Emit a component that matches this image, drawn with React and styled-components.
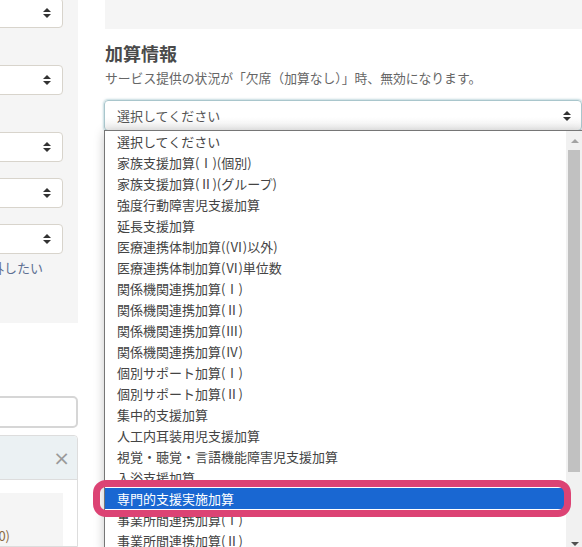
import React from 'react';
import styled, { createGlobalStyle } from 'styled-components';

const options = [
  '選択してください',
  '家族支援加算(Ⅰ)(個別)',
  '家族支援加算(Ⅱ)(グループ)',
  '強度行動障害児支援加算',
  '延長支援加算',
  '医療連携体制加算((Ⅵ)以外)',
  '医療連携体制加算(Ⅵ)単位数',
  '関係機関連携加算(Ⅰ)',
  '関係機関連携加算(Ⅱ)',
  '関係機関連携加算(Ⅲ)',
  '関係機関連携加算(Ⅳ)',
  '個別サポート加算(Ⅰ)',
  '個別サポート加算(Ⅱ)',
  '集中的支援加算',
  '人工内耳装用児支援加算',
  '視覚・聴覚・言語機能障害児支援加算',
  '入浴支援加算',
  '専門的支援実施加算',
  '事業所間連携加算(Ⅰ)',
  '事業所間連携加算(Ⅱ)'
];

const SELECTED = 17;

function Arrows() {
  return (
    <svg width="8" height="12" viewBox="0 0 8 12">
      <polygon points="0,5 4,1 8,5" fill="#333" />
      <polygon points="0,7 4,11 8,7" fill="#333" />
    </svg>
  );
}

export default function App() {
  return (
    <>
      <GlobalStyle />
      <Page>
        <LeftCol>
          <FilterPanel>
            <SmallSelect $mt={-2}><Arrows /></SmallSelect>
            <SmallSelect $mt={37}><Arrows /></SmallSelect>
            <SmallSelect $mt={37}><Arrows /></SmallSelect>
            <SmallSelect $mt={16}><Arrows /></SmallSelect>
            <SmallSelect $mt={16}><Arrows /></SmallSelect>
            <Note><span>集計から除外したい</span></Note>
          </FilterPanel>
          <SearchInput />
          <Card>
            <CardHeader>
              <Close>×</Close>
            </CardHeader>
            <CardBody>
              <GrayBox>
                <Count><span>合計（0)</span></Count>
              </GrayBox>
            </CardBody>
          </Card>
        </LeftCol>

        <RightCol>
          <TopBox />
          <Heading>加算情報</Heading>
          <Description>サービス提供の状況が「欠席（加算なし）」時、無効になります。</Description>
          <SelectWrap>
            <SelectControl>
              <span>選択してください</span>
              <Arrows />
            </SelectControl>
            <Dropdown>
              <OptionList>
                {options.map((o, i) => (
                  <Option key={o} $active={i === SELECTED}>{o}</Option>
                ))}
              </OptionList>
              <Scrollbar>
                <ScrollArrow $up />
                <Thumb />
                <ScrollArrow />
              </Scrollbar>
            </Dropdown>
            <Annotation />
          </SelectWrap>
        </RightCol>
      </Page>
    </>
  );
}

const GlobalStyle = createGlobalStyle`
  html, body {
    margin: 0;
    padding: 0;
    background: #ffffff;
    overflow: hidden;
  }
  body {
    font-family: "Noto Sans CJK JP", "Noto Sans", sans-serif;
    color: #555;
  }
`;

const Page = styled.div`
  display: grid;
  grid-template-columns: 78px 478px;
  column-gap: 26px;
  height: 547px;
  overflow: hidden;
`;

const LeftCol = styled.div`
  overflow: hidden;
  min-width: 0;
  display: flex;
  flex-direction: column;
`;

const FilterPanel = styled.div`
  background: #f5f5f5;
  height: 323px;
  padding-right: 15px;
  display: flex;
  flex-direction: column;
  flex-shrink: 0;
`;

const SmallSelect = styled.div`
  margin-top: ${p => p.$mt}px;
  margin-left: -40px;
  height: 28px;
  background: #fff;
  border: 1px solid #d8d4cc;
  border-radius: 4px;
  display: flex;
  align-items: center;
  justify-content: flex-end;
  padding-right: 11px;
  flex-shrink: 0;
`;

const Note = styled.div`
  display: flex;
  justify-content: flex-end;
  margin-top: 4px;
  margin-right: -15px;
  padding-right: 35px;
  font-size: 13px;
  line-height: 20px;
  color: #5d6f92;
  white-space: nowrap;
`;

const SearchInput = styled.div`
  margin-top: 73px;
  margin-left: -20px;
  height: 28px;
  border: 2px solid #d6d6d6;
  border-radius: 5px;
  background: #fff;
  flex-shrink: 0;
`;

const Card = styled.div`
  margin-top: 7px;
  margin-left: -20px;
  min-width: 0;
  border: 1px solid #dddddd;
  border-radius: 4px 4px 0 0;
  flex: 1;
  display: flex;
  flex-direction: column;
`;

const CardHeader = styled.div`
  height: 43px;
  background: #ebf1f3;
  border-bottom: 1px solid #dddddd;
  border-radius: 4px 4px 0 0;
  display: flex;
  align-items: center;
  justify-content: flex-end;
  padding-right: 7px;
`;

const Close = styled.span`
  font-family: "DejaVu Sans", sans-serif;
  font-size: 20px;
  line-height: 20px;
  color: #9a9a9a;
`;

const CardBody = styled.div`
  padding: 13px 14px 0 0;
  flex: 1;
  display: flex;
  min-width: 0;
`;

const GrayBox = styled.div`
  flex: 1;
  min-width: 0;
  background: #f5f5f5;
  display: flex;
  flex-direction: column;
  padding-top: 33px;
`;

const Count = styled.div`
  display: flex;
  justify-content: flex-end;
  padding-right: 53px;
  font-size: 13px;
  color: #8a6a44;
  white-space: nowrap;
`;

const RightCol = styled.div`
  display: flex;
  flex-direction: column;
`;

const TopBox = styled.div`
  height: 29px;
  margin-left: 1px;
  background: #f5f5f5;
`;

const Heading = styled.h3`
  margin: 13px 0 0 1px;
  font-size: 18px;
  line-height: 22px;
  font-weight: bold;
  color: #4a4a4a;
`;

const Description = styled.p`
  margin: 5px 0 0 1px;
  font-size: 12.8px;
  line-height: 18px;
  color: #666;
  white-space: nowrap;
`;

const SelectWrap = styled.div`
  position: relative;
  margin-top: 13px;
`;

const SelectControl = styled.div`
  height: 29px;
  border: 1px solid #a9c6cc;
  border-radius: 4px;
  box-shadow: 0 0 2px 1px rgba(150, 190, 198, 0.55);
  background: linear-gradient(#ffffff 55%, #efefef);
  display: flex;
  align-items: center;
  justify-content: space-between;
  padding: 0 10px 0 12px;
  font-size: 13px;
  color: #555;
  width: calc(100% - 24px);
`;

const Dropdown = styled.div`
  position: absolute;
  top: 30px;
  left: 0;
  width: 478px;
  height: 420px;
  background: #fff;
  border: 1px solid #767676;
  box-shadow: 0 2px 10px rgba(0, 0, 0, 0.22);
  display: flex;
  overflow: hidden;
`;

const OptionList = styled.ul`
  list-style: none;
  margin: 0;
  padding: 0;
  flex: 1;
`;

const Option = styled.li`
  height: 21px;
  line-height: 21px;
  padding-left: 12px;
  font-size: 13px;
  white-space: nowrap;
  color: ${p => (p.$active ? '#ffffff' : '#444')};
  background: ${p => (p.$active ? '#1967d2' : 'transparent')};
`;

const Scrollbar = styled.div`
  width: 17px;
  background: #f1f1f1;
  display: flex;
  flex-direction: column;
  align-items: center;
`;

const ScrollArrow = styled.div`
  flex-shrink: 0;
  width: 0;
  height: 0;
  margin: ${p => (p.$up ? '8px 0 7px' : '0')};
  border-left: 4px solid transparent;
  border-right: 4px solid transparent;
  ${p => (p.$up
    ? 'border-bottom: 4px solid #a3a3a3;'
    : 'border-top: 4px solid #505050;')}
`;

const Thumb = styled.div`
  width: 12px;
  height: 322px;
  background: #c1c1c1;
  margin-right: 1px;
  margin-bottom: 70px;
`;

const Annotation = styled.div`
  position: absolute;
  top: 380px;
  left: -11px;
  width: 464px;
  height: 23px;
  border: 7px solid #dc4374;
  border-radius: 13px;
  pointer-events: none;
`;
